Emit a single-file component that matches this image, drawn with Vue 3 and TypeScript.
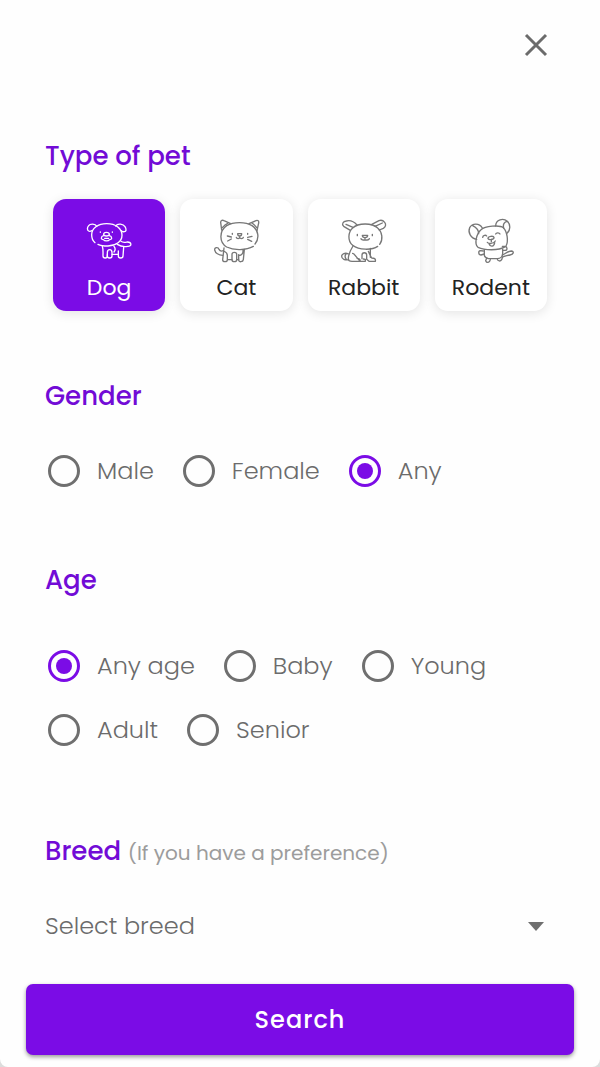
<script setup lang="ts">
import { ref } from 'vue'

interface Pet {
  name: string
  viewBox: string
  paths: string[]
}

const pets: Pet[] = [
  {
    name: 'Dog',
    viewBox: '135 96 144 144',
    paths: [
      'M165 170C158 164 155 156 155 146C155 127 174 113 200 113C228 113 246 128 246 148C246 166 229 179 204 180C192 180 182 179 174 175',
      'M170 121C166 112 150 113 146 119C141 125 141 133 146 135C149 137 152 136 156 134',
      'M227 120C233 111 250 114 255 122C260 130 259 136 253 137C250 138 247 137 244 134',
      'M181 138V139M217 138V139',
      'M191 145C191 141 196 139 199 139C203 139 208 141 208 145C208 148 203 150 199 150C195 150 191 148 191 145Z',
      'M191 149C182 151 182 161 190 161C194 166 205 166 209 161C217 161 217 151 208 149M194 157H206',
      'M187 181C190 190 189 198 189 210C189 218 202 218 202 210V206',
      'M202 210V200C202 188 216 188 216 200V210C216 218 202 218 202 210Z',
      'M216 205H235M222 181C227 187 226 193 222 198',
      'M235 195V210C235 218 249 218 249 210L251 184',
      'M243 166C249 171 256 169 262 168C276 168 276 182 263 181C252 183 241 181 232 175',
    ],
  },
  {
    name: 'Cat',
    viewBox: '128 96 144 144',
    paths: [
      'M252 181C231 193 194 194 172 183C148 169 150 134 172 119C192 107 229 107 248 119C268 132 271 157 257 174',
      'M157 132L154 109C154 102 160 102 164 104L184 113M159 125C164 119 168 115 175 112',
      'M239 113L260 104C266 102 269 105 268 111L263 134M248 111C254 115 258 119 262 125',
      'M189 142V145M235 142V145',
      'M205 143H217C217 148 213 150 211 150C208 150 205 147 205 143ZM211 150V154C211 159 202 159 201 154M211 154C212 159 221 159 222 154',
      'M186 153L174 150M186 159L175 165M235 154L248 151M235 160L247 166',
      'M164 186L160 221C160 229 174 229 174 221V208C174 199 167 197 163 195M174 221H188',
      'M188 205V221C188 229 202 229 202 221V205C202 197 188 197 188 205ZM202 221H208',
      'M208 206V222C208 229 221 229 222 221L225 190M208 209C218 208 222 201 221 192',
      'M160 208C148 208 138 201 136 192C135 183 147 183 149 190C151 194 157 196 162 194',
    ],
  },
  {
    name: 'Rabbit',
    viewBox: '120 96 144 144',
    paths: [
      'M233 181C216 193 177 193 158 178C142 165 144 138 158 126C175 110 216 110 233 126C247 138 250 160 239 175',
      'M151 133L131 121C124 115 129 106 139 105C151 102 163 108 171 117M159 124L138 115',
      'M214 116L237 104C245 101 250 104 254 109C259 115 257 123 250 127L238 132M225 121L247 111',
      'M172 145V149M217 145V149',
      'M187 148H203C203 153 198 155 195 155C191 155 187 152 187 148ZM195 155V159M183 158C184 164 206 164 208 158',
      'M159 180C150 194 145 210 145 219C145 226 150 226 156 226H180C182 219 176 217 171 217M158 202C165 203 168 216 182 226H196V220L190 219',
      'M186 218V207C186 198 200 198 200 207V220L207 226H226C228 218 222 216 215 216C212 210 208 204 205 196M211 187V214',
      'M146 204C135 199 125 203 125 211C125 220 135 223 146 221M138 204C133 210 135 215 139 220',
    ],
  },
  {
    name: 'Rodent',
    viewBox: '128 96 144 144',
    paths: [
      'M243 182C222 195 180 193 161 184C149 174 156 143 170 131C182 120 226 116 237 125C249 137 253 167 245 180',
      'M157 160C139 157 130 139 136 125C144 111 165 111 174 126M145 119C157 125 163 132 163 143',
      'M214 120C214 100 237 95 249 106C259 115 259 133 248 142M238 126C236 118 238 109 248 106',
      'M175 154C176 146 185 147 187 150M214 144C216 139 225 140 227 144',
      'M191 158C190 150 208 149 209 154C210 160 195 164 191 158ZM201 160V167M189 169C193 174 207 174 213 165M194 173C198 184 209 183 211 170',
      'M180 191V208C181 214 186 216 192 218H219C229 218 235 211 235 202V190',
      'M177 195L168 194C161 195 162 207 170 207L180 204M234 181L242 181C250 182 250 193 242 193H235',
      'M187 216L184 224C187 232 196 231 198 221M219 219C220 227 229 226 232 221L235 212M234 207C241 205 250 195 262 195C271 197 266 206 257 207C247 210 240 209 234 214',
    ],
  },
]

const genders = ['Male', 'Female', 'Any']
const ages = ['Any age', 'Baby', 'Young', 'Adult', 'Senior']

const pet = ref('Dog')
const gender = ref('Any')
const age = ref('Any age')
const breed = ref('')
</script>

<template>
  <form class="filters" @submit.prevent>
    <header class="top">
      <button type="button" class="close" aria-label="Close">
        <svg viewBox="0 0 24 24" aria-hidden="true"><path d="M2 2L22 22M22 2L2 22" /></svg>
      </button>
    </header>

    <fieldset class="group pets">
      <legend class="title">Type of pet</legend>
      <div class="cards">
        <label v-for="p in pets" :key="p.name" class="card" :class="{ selected: pet === p.name }">
          <input v-model="pet" class="card-input" type="radio" name="pet" :value="p.name" />
          <svg class="pet-icon" :viewBox="p.viewBox" aria-hidden="true">
            <path v-for="(d, i) in p.paths" :key="i" :d="d" />
          </svg>
          <span>{{ p.name }}</span>
        </label>
      </div>
    </fieldset>

    <fieldset class="group gender">
      <legend class="title">Gender</legend>
      <div class="options">
        <label v-for="g in genders" :key="g" class="option">
          <input v-model="gender" class="radio" type="radio" name="gender" :value="g" />
          <span>{{ g }}</span>
        </label>
      </div>
    </fieldset>

    <fieldset class="group age">
      <legend class="title">Age</legend>
      <div class="options">
        <label v-for="a in ages" :key="a" class="option">
          <input v-model="age" class="radio" type="radio" name="age" :value="a" />
          <span>{{ a }}</span>
        </label>
      </div>
    </fieldset>

    <div class="group breed">
      <label class="title" for="breed">Breed <small class="hint">(If you have a preference)</small></label>
      <div class="select-box">
        <select id="breed" v-model="breed" class="select">
          <option value="">Select breed</option>
        </select>
        <svg class="caret" viewBox="0 0 16 9" aria-hidden="true"><path d="M0 0H16L8 9Z" /></svg>
      </div>
    </div>

    <footer class="bottom">
      <button type="submit" class="search">Search</button>
    </footer>
  </form>
</template>

<style>
body {
  margin: 0;
  background: #dcdcdc;
}
</style>

<style scoped>
.filters {
  box-sizing: border-box;
  min-height: 100vh;
  display: flex;
  flex-direction: column;
  background: #fefefe;
  border-radius: 0 0 8px 8px;
  font-family: Poppins, Inter, "Liberation Sans", sans-serif;
  font-size: 24px;
  line-height: 32px;
  color: #6b6b6b;
}

.top {
  display: flex;
  justify-content: flex-end;
  padding: 21px 40px 67px;
}

.close {
  width: 48px;
  height: 48px;
  display: grid;
  place-items: center;
  padding: 0;
  border: 0;
  background: none;
}

.close svg {
  width: 24px;
  height: 24px;
  fill: none;
  stroke: #6b6b6b;
  stroke-width: 3;
}

.group {
  min-width: 0;
  margin: 0;
  padding: 0 45px;
  border: 0;
}

.title {
  display: block;
  padding: 0;
  font-size: 26px;
  font-weight: 500;
  line-height: 40px;
  color: #720bd6;
}

.cards {
  display: grid;
  grid-template-columns: repeat(4, 1fr);
  gap: 15px;
  padding: 23px 8px 0;
}

.card {
  box-sizing: border-box;
  min-height: 112px;
  display: flex;
  flex-direction: column;
  align-items: center;
  gap: 6px;
  padding: 19px 0 7px;
  border-radius: 13px;
  background: #fff;
  box-shadow: 0 2px 12px rgba(0, 0, 0, 0.11);
  font-size: 22px;
  color: #222;
}

.card.selected {
  background: #7b0ce6;
  color: #fff;
}

.card-input {
  position: absolute;
  opacity: 0;
  pointer-events: none;
}

.pet-icon {
  width: 48px;
  height: 48px;
  fill: none;
  stroke: #777;
  stroke-width: 4;
  stroke-linecap: round;
  stroke-linejoin: round;
}

.selected .pet-icon {
  stroke: #fff;
}

.gender {
  margin-top: 65px;
}

.gender .options {
  padding-top: 23px;
}

.age {
  margin-top: 57px;
}

.age .options {
  padding-top: 34px;
}

.options {
  display: flex;
  flex-wrap: wrap;
  column-gap: 29px;
  padding-left: 3px;
}

.option {
  display: flex;
  align-items: center;
  gap: 17px;
  height: 64px;
  font-weight: 300;
}

.radio {
  appearance: none;
  box-sizing: border-box;
  width: 32px;
  height: 32px;
  display: grid;
  place-items: center;
  margin: 0;
  border: 3px solid #6f6f6f;
  border-radius: 50%;
}

.radio:checked {
  border-color: #7b0ce6;
}

.radio:checked::before {
  content: "";
  width: 16px;
  height: 16px;
  border-radius: 50%;
  background: #7b0ce6;
}

.breed {
  margin-top: 69px;
}

.hint {
  font-size: 20px;
  font-weight: 400;
  color: #9c9c9c;
}

.select-box {
  display: grid;
  align-items: center;
  margin-top: 29px;
}

.select {
  grid-area: 1 / 1;
  appearance: none;
  width: 100%;
  height: 48px;
  padding: 0;
  border: 0;
  background: none;
  font: inherit;
  font-weight: 300;
  color: inherit;
}

.caret {
  grid-area: 1 / 1;
  justify-self: end;
  width: 16px;
  height: 9px;
  margin-right: 11px;
  fill: #6f6f6f;
  pointer-events: none;
}

.bottom {
  margin-top: auto;
  padding: 32px 26px 12px;
}

.search {
  width: 100%;
  height: 71px;
  border: 0;
  border-radius: 7px;
  background: #7b0ce6;
  box-shadow: 0 2px 4px rgba(0, 0, 0, 0.4);
  font: inherit;
  font-weight: 500;
  letter-spacing: 1px;
  color: #fff;
}
</style>
